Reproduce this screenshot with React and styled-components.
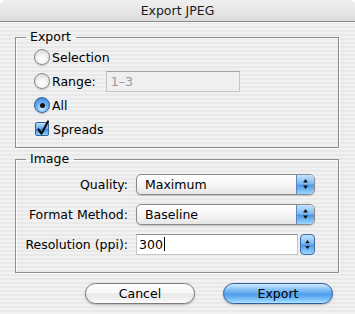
import React from "react";
import styled, { createGlobalStyle } from "styled-components";

const Global = createGlobalStyle`
  html, body {
    margin: 0;
    padding: 0;
    background: #fff;
  }
  body {
    font-family: "DejaVu Sans", "Noto Sans", sans-serif;
    font-size: 12px;
    color: #000;
  }
`;

const pinstripe = `repeating-linear-gradient(
  180deg,
  #f1f1f1 0px,
  #f1f1f1 2px,
  #e9e9e9 2px,
  #e9e9e9 4px
)`;

const Window = styled.div`
  width: 355px;
  height: 314px;
  overflow: hidden;
  background: ${pinstripe};
  border-radius: 6px 6px 0 0;
  display: flex;
  flex-direction: column;
`;

const TitleBar = styled.div`
  height: 21px;
  flex: none;
  border-bottom: 1px solid #8b8b8b;
  background: linear-gradient(180deg, #efefef 0%, #e6e6e6 55%, #dcdcdc 100%);
  border-radius: 6px 6px 0 0;
  display: flex;
  align-items: center;
  justify-content: center;
  font-size: 12.5px;
  color: #1a1a1a;
  box-shadow: 0 1px 0 #f8f8f8;
`;

const Body = styled.div`
  padding: 0 16px 0 15px;
  display: flex;
  flex-direction: column;
`;

const Group = styled.fieldset`
  margin: ${(p) => p.$top}px 0 0 0;
  padding: 0 0 ${(p) => p.$bottom}px 0;
  border: 1px solid #8e8e8e;
  box-shadow: 1px 1px 0 #fbfbfb, inset 1px 1px 0 #fbfbfb;
  min-width: 0;
`;

const Legend = styled.legend`
  margin-left: 10px;
  padding: 0 5px 0 4px;
  line-height: 16px;
  font-size: 12.5px;
`;

const OptionRow = styled.label`
  height: 24px;
  display: flex;
  align-items: center;
  padding-left: 18px;
  font-size: 12.5px;
  gap: 2px;
`;

const Radio = styled.span`
  width: 16px;
  height: 16px;
  flex: none;
  box-sizing: border-box;
  border-radius: 50%;
  border: 1px solid ${(p) => (p.$on ? "#33619e" : "#8a8a8a")};
  background: ${(p) =>
    p.$on
      ? "radial-gradient(circle at 50% 75%, #c8ecff 0%, #6cb3f2 45%, #2f7ad9 100%)"
      : "radial-gradient(circle at 50% 70%, #ffffff 0%, #f2f2f2 45%, #c9c9c9 100%)"};
  box-shadow: 0 1px 1px rgba(0, 0, 0, 0.2);
  display: flex;
  align-items: center;
  justify-content: center;

  &::after {
    content: "";
    display: ${(p) => (p.$on ? "block" : "none")};
    width: 5px;
    height: 5px;
    border-radius: 50%;
    background: #111;
  }
`;

const Check = styled.span`
  width: 14px;
  height: 14px;
  flex: none;
  box-sizing: border-box;
  border-radius: 2px;
  border: 1px solid #33619e;
  background: linear-gradient(180deg, #b9e0ff 0%, #5fa7ef 50%, #3a86e2 51%, #8fd0ff 100%);
  position: relative;
  margin: 0 2px 0 1px;

  svg {
    position: absolute;
    left: 0px;
    top: -4px;
  }
`;

const RangeField = styled.span`
  margin-left: 8px;
  width: 134px;
  height: 21px;
  box-sizing: border-box;
  border: 1px solid #c4c4c4;
  border-top-color: #a6a6a6;
  background: #efefef;
  display: flex;
  align-items: center;
  padding-left: 4px;
  color: #9a9a9a;
  font-size: 12.5px;
`;

const FormGrid = styled.div`
  display: grid;
  grid-template-columns: 112px 179px;
  column-gap: 8px;
  grid-auto-rows: 30px;
  align-items: center;
  padding-top: 2px;
`;

const FieldLabel = styled.span`
  justify-self: end;
  font-size: 12.5px;
`;

const Popup = styled.div`
  height: 21px;
  box-sizing: border-box;
  border: 1px solid #8a8a8a;
  border-radius: 5px;
  background: linear-gradient(180deg, #ffffff 0%, #f6f6f6 50%, #e6e6e6 100%);
  box-shadow: 0 1px 1px rgba(0, 0, 0, 0.18);
  display: flex;
  align-items: center;
  overflow: hidden;
  font-size: 12.5px;
`;

const PopupText = styled.span`
  flex: 1;
  padding-left: 8px;
`;

const Stepper = styled.span`
  width: 17px;
  align-self: stretch;
  flex: none;
  border-left: 1px solid #5b86bf;
  background: linear-gradient(180deg, #c4e4ff 0%, #7ab8f2 48%, #4b95e6 52%, #9dd6ff 100%);
  display: flex;
  align-items: center;
  justify-content: center;
`;

const Combo = styled.div`
  height: 21px;
  display: flex;
  align-items: stretch;
  gap: 2px;
`;

const ComboField = styled.span`
  flex: 1;
  box-sizing: border-box;
  border: 1px solid #c6c6c6;
  border-top-color: #8e8e8e;
  background: #fff;
  display: flex;
  align-items: center;
  padding-left: 2px;
  font-size: 12.5px;
`;

const Caret = styled.span`
  width: 1px;
  height: 14px;
  background: #000;
  margin-left: 1px;
`;

const ComboStepper = styled.span`
  width: 15px;
  flex: none;
  box-sizing: border-box;
  border: 1px solid #3f6aa8;
  border-radius: 4px;
  background: linear-gradient(180deg, #c4e4ff 0%, #7ab8f2 48%, #4b95e6 52%, #9dd6ff 100%);
  display: flex;
  align-items: center;
  justify-content: center;
`;

const Buttons = styled.div`
  margin-top: 10px;
  display: flex;
  justify-content: flex-end;
  gap: 28px;
  padding-right: 6px;
`;

const Button = styled.button`
  width: ${(p) => p.$w}px;
  height: 21px;
  border-radius: 11px;
  font-family: inherit;
  font-size: 12.5px;
  color: #000;
  padding: 0;
  cursor: pointer;
  border: 1px solid ${(p) => (p.$primary ? "#2e5a9c" : "#7a7a7a")};
  background: ${(p) =>
    p.$primary
      ? "linear-gradient(180deg, #d2ebff 0%, #8fc6f6 25%, #5aa5ee 50%, #4d9cec 55%, #8dd0ff 90%, #b8e6ff 100%)"
      : "linear-gradient(180deg, #ffffff 0%, #f7f7f7 45%, #e8e8e8 55%, #f4f4f4 90%, #ffffff 100%)"};
  box-shadow: 0 1px 2px rgba(0, 0, 0, 0.25);
`;

const Arrows = ({ small }) => (
  <svg width="7" height={small ? 11 : 12} viewBox="0 0 7 12">
    <path d="M3.5 1 L6 4.5 L1 4.5 Z" fill="#111" />
    <path d="M3.5 11 L6 7.5 L1 7.5 Z" fill="#111" />
  </svg>
);

const CheckMark = () => (
  <svg width="14" height="18" viewBox="0 0 14 18">
    <path
      d="M2.5 10.5 L5.5 14.5 L12 2.5"
      fill="none"
      stroke="#111"
      strokeWidth="2.2"
      strokeLinecap="round"
      strokeLinejoin="round"
    />
  </svg>
);

export default function App() {
  return (
    <>
      <Global />
      <Window>
        <TitleBar>Export JPEG</TitleBar>
        <Body>
          <Group $top={7} $bottom={6}>
            <Legend>Export</Legend>
            <OptionRow>
              <Radio />
              Selection
            </OptionRow>
            <OptionRow>
              <Radio />
              Range:
              <RangeField>1–3</RangeField>
            </OptionRow>
            <OptionRow>
              <Radio $on />
              All
            </OptionRow>
            <OptionRow>
              <Check>
                <CheckMark />
              </Check>
              Spreads
            </OptionRow>
          </Group>

          <Group $top={3} $bottom={13}>
            <Legend>Image</Legend>
            <FormGrid>
              <FieldLabel>Quality:</FieldLabel>
              <Popup>
                <PopupText>Maximum</PopupText>
                <Stepper>
                  <Arrows />
                </Stepper>
              </Popup>
              <FieldLabel>Format Method:</FieldLabel>
              <Popup>
                <PopupText>Baseline</PopupText>
                <Stepper>
                  <Arrows />
                </Stepper>
              </Popup>
              <FieldLabel>Resolution (ppi):</FieldLabel>
              <Combo>
                <ComboField>
                  300
                  <Caret />
                </ComboField>
                <ComboStepper>
                  <Arrows small />
                </ComboStepper>
              </Combo>
            </FormGrid>
          </Group>

          <Buttons>
            <Button $w={110}>Cancel</Button>
            <Button $w={110} $primary>
              Export
            </Button>
          </Buttons>
        </Body>
      </Window>
    </>
  );
}
